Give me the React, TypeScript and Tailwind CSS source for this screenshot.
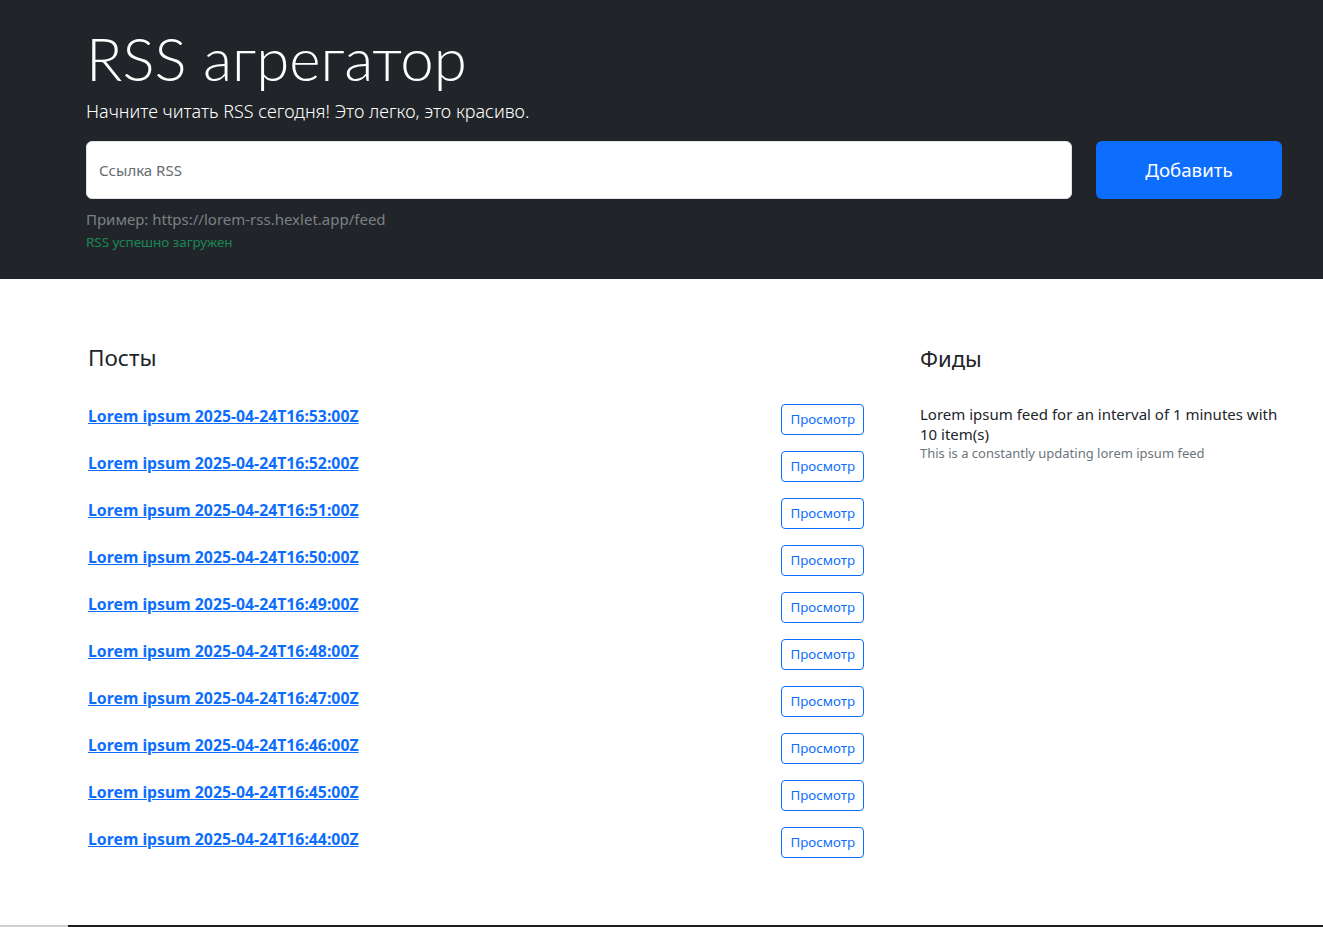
import React from "react";

const posts = [
  "2025-04-24T16:53:00Z",
  "2025-04-24T16:52:00Z",
  "2025-04-24T16:51:00Z",
  "2025-04-24T16:50:00Z",
  "2025-04-24T16:49:00Z",
  "2025-04-24T16:48:00Z",
  "2025-04-24T16:47:00Z",
  "2025-04-24T16:46:00Z",
  "2025-04-24T16:45:00Z",
  "2025-04-24T16:44:00Z",
];

export default function App() {
  return (
    <div className="min-h-[927px] bg-white text-[#212529] flex flex-col" style={{ fontFamily: '"Noto Sans", "Open Sans", sans-serif' }}>
      <section className="bg-[#212529] h-[279px] pl-[86px] pr-[41px] pt-[22px]">
        <h1 className="text-[60px] font-light leading-[72px] text-white" style={{ fontFamily: 'Lato, "Noto Sans", sans-serif' }}>RSS агрегатор</h1>
        <p className="text-[18px] font-light leading-[24px] text-white mt-[5px]">Начните читать RSS сегодня! Это легко, это красиво.</p>
        <div className="flex mt-[18px] gap-[24px]">
          <div className="flex-1 h-[58px] bg-white rounded-[6px] border border-[#dee2e6] flex items-center px-[12px]">
            <span className="text-[15px] text-[#656a70]">Ссылка RSS</span>
          </div>
          <button className="w-[186px] h-[58px] bg-[#0d6efd] rounded-[6px] text-white text-[18.7px]">Добавить</button>
        </div>
        <p className="text-[15px] text-[#7b8085] mt-[9px] leading-[22px]">Пример: https://lorem-rss.hexlet.app/feed</p>
        <p className="text-[13.4px] text-[#198754] leading-[20px] mt-[2px]">RSS успешно загружен</p>
      </section>
      <main className="flex pl-[72px] pt-[65px]">
        <div className="w-[808px]">
          <h2 className="px-[16px] text-[22.5px] leading-[28px] font-normal">Посты</h2>
          <ul className="mt-[24px]">
            {posts.map((p) => (
              <li key={p} className="flex justify-between items-start px-[16px] py-[8px]">
                <a href="#" className="font-bold text-[15.8px] leading-[24px] text-[#0d6efd] underline">Lorem ipsum {p}</a>
                <button className="h-[31px] px-[8px] border border-[#0d6efd] rounded-[4px] text-[#0d6efd] text-[13.3px] leading-[21px]">Просмотр</button>
              </li>
            ))}
          </ul>
        </div>
        <div className="ml-[24px] w-[410px] pl-[16px]">
          <h2 className="text-[22px] leading-[28px] font-normal">Фиды</h2>
          <div className="mt-[33px] w-[370px]">
            <h3 className="text-[15px] leading-[19.5px]">Lorem ipsum feed for an interval of 1 minutes with 10 item(s)</h3>
            <p className="text-[13px] leading-[18px] text-[#6c757d]">This is a constantly updating lorem ipsum feed</p>
          </div>
        </div>
      </main>
      <div className="mt-auto flex h-[2px]">
        <div className="w-[68px] bg-[#d0d0d0]" />
        <div className="flex-1 bg-[#1c1c1c]" />
      </div>
    </div>
  );
}
